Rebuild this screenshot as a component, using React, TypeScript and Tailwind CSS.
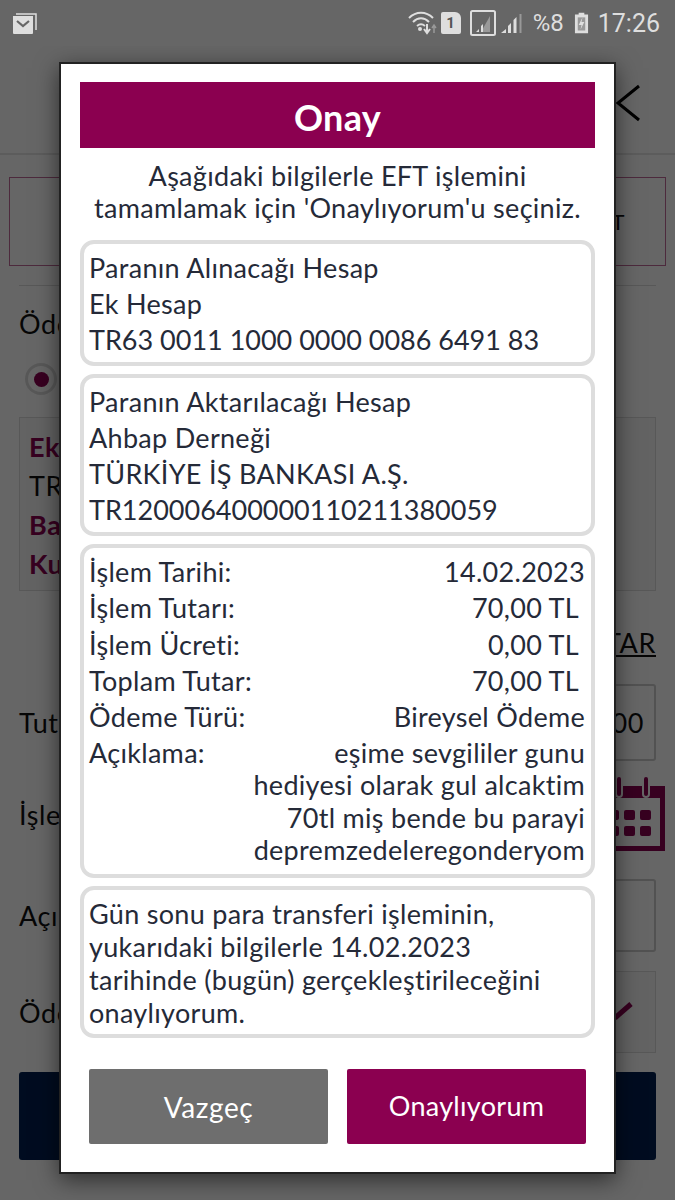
const font = { fontFamily: "Lato, 'Noto Sans', sans-serif" };

function StatusBar() {
  return (
    <div className="relative z-20 flex h-[46px] items-center justify-between bg-[#666666] pr-[15px] pl-3 text-[#dedede]">
      <svg width="25" height="21" viewBox="0 0 25 21" fill="none" className="mt-[1px]">
        <path d="M4 1h20v16" stroke="#dedede" strokeWidth="1.500" />
        <path d="M1 3h20v17a1 1 0 0 1-1 1H2a1 1 0 0 1-1-1z" fill="#dedede" />
        <path d="M5 8l6 5 6-5" stroke="#666666" strokeWidth="2.200" />
      </svg>
      <div className="flex items-center" style={{ fontFamily: "Roboto, sans-serif" }}>
        <svg width="30" height="26" viewBox="0 0 30 26" fill="none" className="mr-[3px]">
          <path d="M1 8c7-7 17-7 24 0" stroke="#dedede" strokeWidth="2" />
          <path d="M5 12c5-5 11-5 16 0" stroke="#dedede" strokeWidth="2" />
          <path d="M9 16c3-2.500 5-2.500 8 0" stroke="#dedede" strokeWidth="2" />
          <circle cx="12" cy="19" r="2" fill="#dedede" />
          <path d="M19 14v8M16 19l3 4 3-4" stroke="#dedede" strokeWidth="2" />
          <path d="M26 23v-7M24 18l2-3 2 3" stroke="#999999" strokeWidth="1.500" />
        </svg>
        <div className="mr-[9px] flex h-[22px] w-[20px] items-center justify-center rounded-[2px] rounded-tr-[6px] bg-[#dedede] text-[15px] leading-none font-bold text-[#555555]">
          1
        </div>
        <svg width="26" height="26" viewBox="0 0 26 26" fill="none" className="mr-[5px]">
          <rect x="1" y="1" width="24" height="24" rx="1.500" stroke="#dedede" strokeWidth="2" />
          <path d="M20 6v16H11z" fill="#999999" />
          <path d="M6 22l3-3v3zM11 22v-6l2-2v8z" fill="#dedede" />
        </svg>
        <svg width="22" height="24" viewBox="0 0 22 24" className="mr-[10px]">
          <path d="M0 22l5-4v4zM7 22v-7l3-3v10z" fill="#dedede" />
          <path d="M12.500 22V9l3-3v16z" fill="#dedede" />
          <path d="M18.500 22V3h2v19z" fill="#999999" />
        </svg>
        <span className="mr-[10px] text-[24px] leading-none">%8</span>
        <svg width="15" height="24" viewBox="0 0 16 24" className="mr-[9px]">
          <path d="M5 1h6v2h4v20H1V3h4z" fill="#dedede" />
          <path d="M4 6h8v14H4z" fill="#999999" />
          <path d="M9 6l-4 8h3l-1 5 4-8H8z" fill="#dedede" />
        </svg>
        <span className="text-[25px] leading-none">17:26</span>
      </div>
    </div>
  );
}

function BackPage() {
  return (
    <div className="bg-white text-[27px] leading-none tracking-[0.6px] text-[#111111]" style={font}>
      <div className="flex h-[109px] items-start justify-end border-b-2 border-[#e6e6e6] pt-[38px] pr-[34px]">
        <svg width="26" height="38" viewBox="0 0 26 38" fill="none">
          <path d="M24 2L3 19l21 17" stroke="#000000" strokeWidth="3" />
        </svg>
      </div>
      <div className="mx-[9px] mt-[22px] flex h-[89px] items-center justify-end border border-[#c06a9a] pr-[40px] text-[22px] text-[#111111]">
        EFT
      </div>
      <div className="mx-[19px] mt-[19px] border-t border-[#dddddd]" />
      <div className="mx-[19px] mt-[24px] h-[26px]">Ödeme Yapılacak Hesap</div>
      <div className="mt-[27px] ml-[25px] flex h-[32px] w-[32px] items-center justify-center rounded-full bg-[#dddddd]">
        <div className="flex h-[26px] w-[26px] items-center justify-center rounded-full bg-white">
          <div className="h-[15px] w-[15px] rounded-full bg-[#8b0050]" />
        </div>
      </div>
      <div className="mx-[19px] mt-[22px] flex h-[174px] flex-col gap-[12px] border border-[#dddddd] bg-[#f8f8f8] px-[9px] pt-[15px] pb-[12px]">
        <div className="font-bold text-[#8b0050]">Ek Hesap</div>
        <div>TR63 0011 1000</div>
        <div className="font-bold text-[#8b0050]">Bakiye</div>
        <div className="font-bold text-[#8b0050]">Kullanılabilir</div>
      </div>
      <div className="mx-[19px] mt-[38px] flex justify-end">
        <span className="underline">TÜMÜNÜ AKTAR</span>
      </div>
      <div className="mx-[19px] mt-[28px] flex h-[77px] items-center justify-between">
        <span>Tutar</span>
        <div className="flex h-full w-[300px] items-center justify-end rounded-[3px] border-2 border-[#cccccc] pr-[10px]">
          70,00
        </div>
      </div>
      <div className="mt-[15px] mr-[9px] ml-[19px] flex h-[76px] items-center justify-between">
        <span>İşlem Tarihi</span>
        <svg width="66" height="76" viewBox="0 0 66 76">
          <path d="M0 10h65v65H0zM6 22v48h54V22z" fill="#8b0050" fillRule="evenodd" />
          <rect x="16" y="0" width="6" height="21" rx="3" fill="#8b0050" stroke="#ffffff" strokeWidth="2" />
          <rect x="43" y="0" width="6" height="21" rx="3" fill="#8b0050" stroke="#ffffff" strokeWidth="2" />
          <rect x="8" y="34" width="11" height="10" rx="2" fill="#8b0050" />
          <rect x="24" y="34" width="11" height="10" rx="2" fill="#8b0050" />
          <rect x="40" y="34" width="11" height="10" rx="2" fill="#8b0050" />
          <rect x="8" y="50" width="11" height="10" rx="2" fill="#8b0050" />
          <rect x="24" y="50" width="11" height="10" rx="2" fill="#8b0050" />
          <rect x="40" y="50" width="11" height="10" rx="2" fill="#8b0050" />
        </svg>
      </div>
      <div className="mx-[19px] mt-[27px] flex h-[73px] items-center justify-between">
        <span>Açıklama</span>
        <div className="h-full w-[300px] rounded-[3px] border-2 border-[#cccccc]" />
      </div>
      <div className="mx-[19px] mt-[19px] flex h-[82px] items-center justify-between">
        <span>Ödeme Türü</span>
        <div className="flex h-full w-[300px] items-center justify-end border border-[#dddddd] bg-[#f8f8f8] pr-[22px] pb-[4px]">
          <svg width="20" height="20" viewBox="0 0 20 20">
            <path d="M2 18L18 4" stroke="#8b0050" strokeWidth="5" />
          </svg>
        </div>
      </div>
      <div className="mx-[19px] mt-[19px] h-[88px] rounded-[3px] bg-[#002050]" />
      <div className="h-[40px]" />
    </div>
  );
}

function InfoBox({ className, children }: { className: string; children: React.ReactNode }) {
  return <div className={`rounded-[14px] border-[4px] border-[#dddddd] pr-[6px] pl-[5px] ${className}`}>{children}</div>;
}

function Row({ label, value, shift }: { label: string; value: string; shift?: boolean }) {
  return (
    <div className="flex h-[36.300px] justify-between">
      <span>{label}</span>
      <span className={shift ? "mr-[6px]" : ""}>{value}</span>
    </div>
  );
}

function ConfirmDialog() {
  return (
    <div
      className="absolute top-[62px] left-[59px] z-10 flex h-[1112px] w-[557px] flex-col border-2 border-[#222222] bg-white px-[19px] pt-[18px] text-[27px] tracking-[0.3px] text-[#252a38] shadow-[0_6px_22px_rgba(0,0,0,0.55)]"
      style={font}
    >
      <div className="flex h-[66px] items-center justify-center bg-[#8b0050] pt-[4px] text-[36px] font-bold text-white">Onay</div>
      <p className="mt-[12px] text-center leading-[32px]">
        Aşağıdaki bilgilerle EFT işlemini
        <br />
        tamamlamak için 'Onaylıyorum'u seçiniz.
      </p>
      <InfoBox className="mt-[16px] h-[126px] pt-[6px] leading-[36px]">
        <div>Paranın Alınacağı Hesap</div>
        <div>Ek Hesap</div>
        <div className="tracking-normal">TR63 0011 1000 0000 0086 6491 83</div>
      </InfoBox>
      <InfoBox className="mt-[8px] h-[162px] pt-[6px] leading-[36px]">
        <div>Paranın Aktarılacağı Hesap</div>
        <div>Ahbap Derneği</div>
        <div>TÜRKİYE İŞ BANKASI A.Ş.</div>
        <div className="tracking-normal">TR120006400000110211380059</div>
      </InfoBox>
      <InfoBox className="mt-[8px] h-[334px] pt-[7px] leading-[33px]">
        <Row label="İşlem Tarihi:" value="14.02.2023" />
        <Row label="İşlem Tutarı:" value="70,00 TL" shift />
        <Row label="İşlem Ücreti:" value="0,00 TL" shift />
        <Row label="Toplam Tutar:" value="70,00 TL" shift />
        <Row label="Ödeme Türü:" value="Bireysel Ödeme" />
        <div className="flex h-[33px] justify-between">
          <span>Açıklama:</span>
          <span>eşime sevgililer gunu</span>
        </div>
        <div className="text-right leading-[32.500px]">
          <div>hediyesi olarak gul alcaktim</div>
          <div>70tl miş bende bu parayi</div>
          <div>depremzedeleregonderyom</div>
        </div>
      </InfoBox>
      <InfoBox className="mt-[8px] h-[152px] pt-[7px] leading-[33px]">
        <div>Gün sonu para transferi işleminin,</div>
        <div>yukarıdaki bilgilerle 14.02.2023</div>
        <div>tarihinde (bugün) gerçekleştirileceğini</div>
        <div>onaylıyorum.</div>
      </InfoBox>
      <div className="mt-[31px] flex justify-center gap-[19px]">
        <button className="h-[75px] w-[239px] rounded-[2px] bg-[#6e6e6e] text-[28px] tracking-[0.6px] text-white">Vazgeç</button>
        <button className="h-[75px] w-[239px] rounded-[2px] bg-[#8b0050] text-[27px] text-white">Onaylıyorum</button>
      </div>
    </div>
  );
}

export default function App() {
  return (
    <div className="relative h-[1200px] w-[675px] overflow-hidden bg-white">
      <StatusBar />
      <BackPage />
      <div className="absolute inset-0 bg-black/60" />
      <ConfirmDialog />
    </div>
  );
}
